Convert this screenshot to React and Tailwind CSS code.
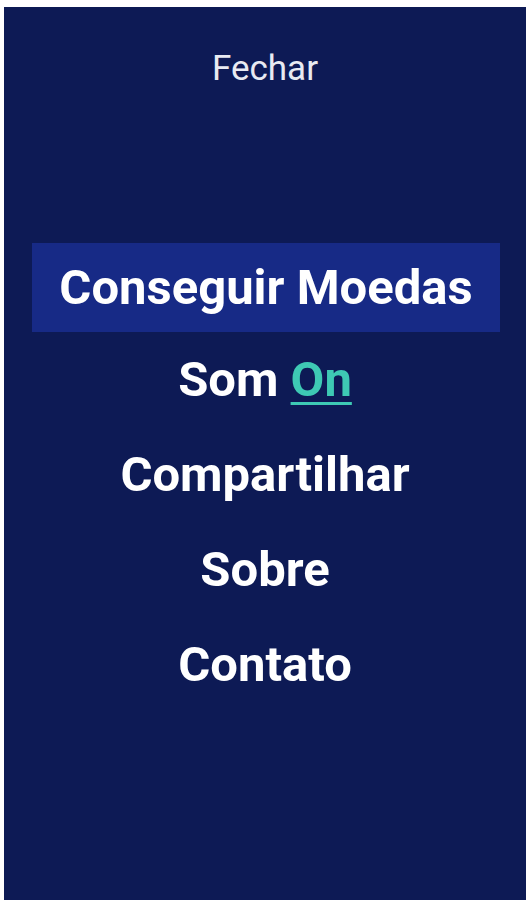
import React, { useState } from "react";

export default function App() {
  const [som, setSom] = useState(true);
  const items = ["Compartilhar", "Sobre", "Contato"];

  return (
    <div className="bg-white pt-[7px] pl-[4px] h-[900px] w-[526px]" style={{ fontFamily: "Roboto, 'Liberation Sans', sans-serif" }}>
      <div className="h-[893px] bg-[#0d1a55] flex flex-col items-center">
        <button className="mt-[41px] text-[35px] leading-[42px] text-[#e8eaf2]">Fechar</button>
        <nav className="mt-[153px] w-full flex flex-col items-center">
          <a className="self-start ml-[28px] w-[468px] h-[89px] flex items-center justify-center bg-[#172a86] text-white font-bold text-[49px]">
            Conseguir Moedas
          </a>
          <a className="h-[95px] flex items-center justify-center text-white font-bold text-[49px]" onClick={() => setSom(!som)}>
            Som&nbsp;<span className="text-[#3ec9b4] underline decoration-[3px] underline-offset-[6px]">{som ? "On" : "Off"}</span>
          </a>
          {items.map((label) => (
            <a key={label} className="h-[95px] flex items-center justify-center text-white font-bold text-[49px]">
              {label}
            </a>
          ))}
        </nav>
      </div>
    </div>
  );
}
